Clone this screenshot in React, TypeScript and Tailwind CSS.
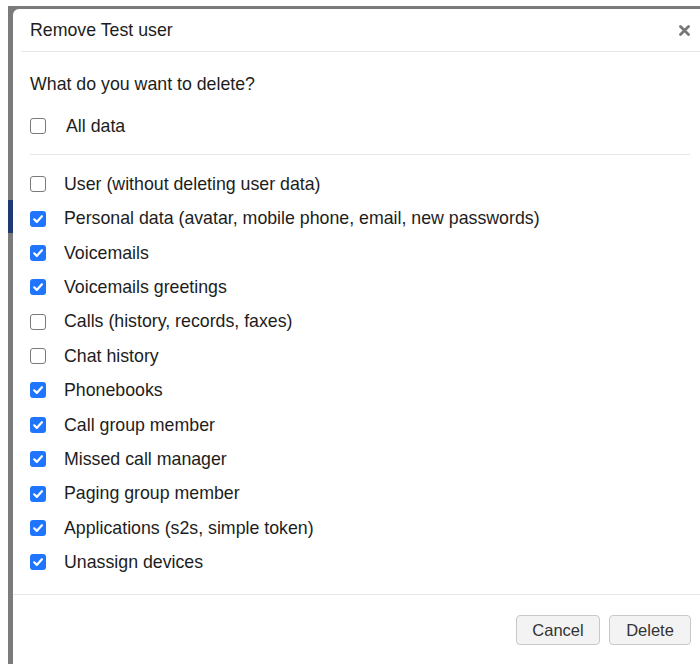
import React from "react";

type Item = { label: string; checked: boolean };

const items: Item[] = [
  { label: "User (without deleting user data)", checked: false },
  { label: "Personal data (avatar, mobile phone, email, new passwords)", checked: true },
  { label: "Voicemails", checked: true },
  { label: "Voicemails greetings", checked: true },
  { label: "Calls (history, records, faxes)", checked: false },
  { label: "Chat history", checked: false },
  { label: "Phonebooks", checked: true },
  { label: "Call group member", checked: true },
  { label: "Missed call manager", checked: true },
  { label: "Paging group member", checked: true },
  { label: "Applications (s2s, simple token)", checked: true },
  { label: "Unassign devices", checked: true },
];

function Box({ checked }: { checked: boolean }) {
  if (checked) {
    return (
      <span className="flex h-[16px] w-[16px] shrink-0 items-center justify-center rounded-[3px] bg-[#1f75fe]">
        <svg width="12" height="12" viewBox="0 0 12 12" fill="none">
          <path d="M2.2 6.3 L4.8 8.9 L9.9 3.2" stroke="#fff" strokeWidth="2.2" strokeLinecap="round" strokeLinejoin="round" />
        </svg>
      </span>
    );
  }
  return <span className="h-[16px] w-[16px] shrink-0 rounded-[3px] border border-[#7a7a7a] bg-white" />;
}

function Row({ item, gap }: { item: Item; gap: string }) {
  return (
    <label className={`flex h-[34.36px] items-center ${gap}`}>
      <Box checked={item.checked} />
      <span>{item.label}</span>
    </label>
  );
}

export default function App() {
  return (
    <div
      className="flex h-[664px] w-[700px] flex-col overflow-hidden bg-white text-[17.75px] text-[#1d1d1d]"
      style={{ fontFamily: '"Liberation Sans", Arial, sans-serif' }}
    >
      <div className="h-[6px] shrink-0" />
      <div className="flex flex-1">
        <div className="w-[8px] shrink-0" />
        <div className="flex flex-1 flex-col bg-[#7b7b7b]">
          <div className="h-[3px] shrink-0" />
          <div className="flex flex-1">
            {/* page behind the dialog */}
            <div className="flex w-[5px] shrink-0 flex-col">
              <div className="h-[191px] bg-[#7b7b7b]" />
              <div className="h-[33px] bg-[#1e3a72]" />
              <div className="flex-1 bg-[#7b7b7b]" />
            </div>

            {/* dialog */}
            <div className="flex flex-1 flex-col rounded-tl-[6px] bg-white">
              <div className="ml-[8px] flex h-[43px] items-center justify-between border-b border-[#e5e8eb] pl-[9px] pr-[10px]">
                <span className="pt-[1px]">Remove Test user</span>
                <svg width="11" height="11" viewBox="0 0 11 11" className="mt-[1px]">
                  <path d="M1.5 1.5 L9.5 9.5 M9.5 1.5 L1.5 9.5" stroke="#777" strokeWidth="2.8" strokeLinecap="round" />
                </svg>
              </div>

              <div className="flex flex-col pl-[17px] pr-[10px] pt-[20px] pb-[15px]">
                <div className="h-[24px] leading-[24px]">What do you want to delete?</div>
                <div className="mt-[13px]">
                  <Row item={{ label: "All data", checked: false }} gap="gap-[20px]" />
                </div>
                <div className="mt-[11px] h-px bg-[#e5e8eb]" />
                <div className="mt-[11.8px] flex flex-col">
                  {items.map((it) => (
                    <Row key={it.label} item={it} gap="gap-[18px]" />
                  ))}
                </div>
              </div>

              <div className="flex flex-1 items-start justify-end gap-[9px] border-t border-[#e5e8eb] pr-[9px] pt-[20px]">
                <button className="h-[30px] w-[84px] rounded-[4px] border border-[#c9c9c9] bg-[#f3f3f3] text-[16.5px] text-[#333]">
                  Cancel
                </button>
                <button className="h-[30px] w-[82px] rounded-[4px] border border-[#c9c9c9] bg-[#f3f3f3] text-[16.5px] text-[#333]">
                  Delete
                </button>
              </div>
            </div>
          </div>
        </div>
      </div>
    </div>
  );
}
